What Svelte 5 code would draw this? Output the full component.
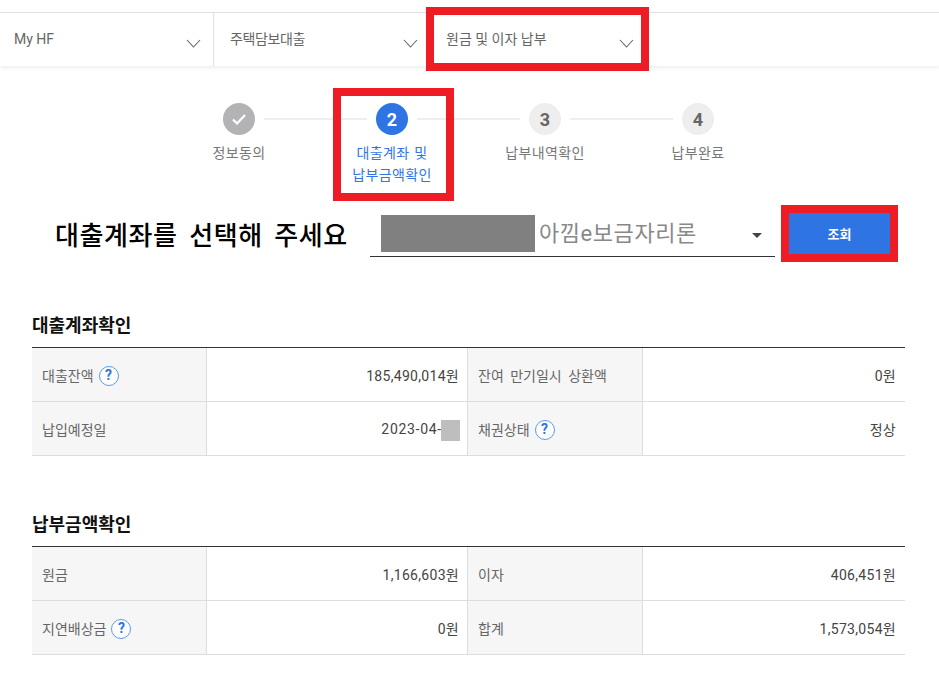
<script>
  const steps = [
    { n: '✓', label: ['정보동의'], cls: 'done' },
    { n: '2', label: ['대출계좌 및', '납부금액확인'], cls: 'active' },
    { n: '3', label: ['납부내역확인'], cls: '' },
    { n: '4', label: ['납부완료'], cls: '' }
  ];
  const nav = [
    { t: 'My HF', w: 214 },
    { t: '주택담보대출', w: 216 },
    { t: '원금 및 이자 납부', w: 216 }
  ];
  const t1 = [
    [{ l: '대출잔액', q: true }, { v: '185,490,014원' }, { l: '잔여 만기일시 상환액' }, { v: '0원' }],
    [{ l: '납입예정일' }, { v: '2023-04-00', mask: true }, { l: '채권상태', q: true }, { v: '정상' }]
  ];
  const t2 = [
    [{ l: '원금' }, { v: '1,166,603원' }, { l: '이자' }, { v: '406,451원' }],
    [{ l: '지연배상금', q: true }, { v: '0원' }, { l: '합계' }, { v: '1,573,054원' }]
  ];
  const sections = [
    { title: '대출계좌확인', rows: t1 },
    { title: '납부금액확인', rows: t2 }
  ];
</script>

<div class="page">
  <nav class="nav">
    {#each nav as item}
      <div class="nav-item" style="width:{item.w}px">
        <span>{item.t}</span>
        <svg class="chev" width="15" height="9" viewBox="0 0 15 9"><path d="M1 1l6.5 7L14 1" fill="none" stroke="#666" stroke-width="1.1"/></svg>
      </div>
    {/each}
  </nav>

  <div class="steps">
    {#each steps as s, i}
      <div class="step {s.cls}">
        <div class="track">
          <div class="line" class:hidden={i === 0}></div>
          {#if s.cls === 'done'}
            <div class="circle"><svg width="16" height="13" viewBox="0 0 16 13"><path d="M2 6.5l4 4 8-8.5" fill="none" stroke="#fff" stroke-width="2.2"/></svg></div>
          {:else}
            <div class="circle">{s.n}</div>
          {/if}
          <div class="line" class:hidden={i === 3}></div>
        </div>
        <div class="label">
          {#each s.label as l}<div>{l}</div>{/each}
        </div>
      </div>
    {/each}
  </div>

  <div class="select-row">
    <h2>대출계좌를 선택해 주세요</h2>
    <div class="select">
      <span class="redact"></span>
      <span class="sel-text">아낌e보금자리론</span>
      <span class="caret"></span>
    </div>
    <button class="btn">조회</button>
  </div>

  {#each sections as sec, si}
    <section class="sec" class:second={si === 1}>
      <h3>{sec.title}</h3>
      <div class="table">
        {#each sec.rows as row}
          {#each row as c}
            {#if c.l}
              <div class="th">
                <span>{c.l}</span>
                {#if c.q}<span class="q">?</span>{/if}
              </div>
            {:else}
              <div class="td" class:date={c.mask}>
                {c.v}
                {#if c.mask}<span class="mask"></span>{/if}
              </div>
            {/if}
          {/each}
        {/each}
      </div>
    </section>
  {/each}

  <div class="mark m1"></div>
  <div class="mark m2"></div>
  <div class="mark m3"></div>
</div>

<style>
  :global(body) {
    margin: 0;
    background: #fff;
  }
  .page {
    position: relative;
    width: 939px;
    height: 679px;
    overflow: hidden;
    font-family: Roboto, "Noto Sans CJK KR", sans-serif;
    padding-top: 12px;
    box-sizing: border-box;
  }
  .nav {
    display: flex;
    height: 54px;
    box-sizing: border-box;
    border-top: 1px solid #e2e2e2;
    box-shadow: 0 2px 4px rgba(0, 0, 0, 0.07);
  }
  .nav-item {
    display: flex;
    justify-content: space-between;
    box-sizing: border-box;
    padding: 17px 12px 0 14px;
    border-right: 1px solid #e2e2e2;
    font-size: 14px;
    line-height: 18px;
    color: #666;
  }
  .nav-item:last-child {
    border-right: 0;
    padding-left: 16px;
  }
  .nav-item:nth-child(2) {
    padding-left: 16px;
    border-right: 0;
    letter-spacing: -0.4px;
  }
  .chev {
    margin-top: 9px;
  }
  .steps {
    display: flex;
    justify-content: center;
    margin-top: 37px;
    padding-right: 2px;
    height: 98px;
  }
  .step {
    width: 153px;
    display: flex;
    flex-direction: column;
    align-items: center;
  }
  .track {
    display: flex;
    align-items: center;
    width: 100%;
    height: 32px;
  }
  .line {
    flex: 1;
    height: 2px;
    background: #eee;
  }
  .hidden {
    background: transparent;
  }
  .circle {
    width: 32px;
    height: 32px;
    border-radius: 50%;
    margin: 0 9px;
    background: #eee;
    color: #666;
    font-size: 18px;
    font-weight: 700;
    display: flex;
    align-items: center;
    justify-content: center;
    flex: none;
  }
  .done .circle {
    background: #b3b3b6;
  }
  .active .circle {
    background: #2f74e3;
    color: #fff;
  }
  .label {
    margin-top: 7px;
    font-size: 14px;
    line-height: 22px;
    color: #777;
    text-align: center;
    letter-spacing: 0.35px;
    word-spacing: 1px;
  }
  .active .label {
    color: #3176e6;
  }
  .select-row {
    display: flex;
    align-items: flex-start;
    margin-top: 7px;
    height: 59px;
    padding-left: 55px;
  }
  h2 {
    margin: 10px 0 0;
    width: 315px;
    font-size: 26px;
    line-height: 37px;
    font-weight: 500;
    color: #000;
    white-space: nowrap;
    letter-spacing: 0.6px;
    word-spacing: 4.5px;
  }
  .select {
    position: relative;
    width: 405px;
    height: 50px;
    box-sizing: border-box;
    margin-top: -1px;
    padding: 8px 0 0 11px;
    border-bottom: 1px solid #333;
    display: flex;
    align-items: flex-start;
  }
  .redact {
    width: 154px;
    height: 37px;
    background: #808080;
  }
  .sel-text {
    margin-left: 4px;
    font-size: 22px;
    line-height: 37px;
    color: #888;
    letter-spacing: 0.55px;
  }
  .caret {
    position: absolute;
    left: 382px;
    top: 26px;
    border: 5px solid transparent;
    border-top-color: #444;
    border-bottom: 0;
  }
  .btn {
    margin: 5px 0 0 14px;
    width: 101px;
    height: 41px;
    border: 0;
    padding: 0;
    background: #2f74e3;
    color: #fff;
    font-family: inherit;
    font-size: 13px;
    font-weight: 700;
  }
  .sec {
    padding: 0 34px 0 32px;
    margin-top: 46px;
  }
  .sec.second {
    margin-top: 56px;
  }
  h3 {
    margin: 0;
    height: 34px;
    font-size: 18px;
    line-height: 26px;
    font-weight: 700;
    color: #111;
  }
  .table {
    display: grid;
    grid-template-columns: 175px 261px 175px 262px;
    border-top: 1px solid #333;
    width: 873px;
  }
  .th,
  .td {
    height: 54px;
    box-sizing: border-box;
    border-bottom: 1px solid #ddd;
    font-size: 14px;
    display: flex;
    align-items: center;
  }
  .th {
    background: #f6f6f6;
    border-right: 1px solid #ddd;
    padding-left: 10px;
    gap: 5px;
    color: #666;
    word-spacing: 3px;
  }
  .td {
    position: relative;
    justify-content: flex-end;
    padding-right: 8px;
    border-right: 1px solid #ddd;
    color: #444;
    letter-spacing: 0.3px;
  }
  .td:nth-child(4n) {
    border-right: 0;
    padding-right: 9px;
  }
  .td.date {
    letter-spacing: 0.7px;
  }
  .q {
    width: 20px;
    height: 20px;
    margin-top: 2px;
    box-sizing: border-box;
    border: 1.5px solid #5a9bec;
    border-radius: 50%;
    color: #2f74e3;
    font-size: 14px;
    font-weight: 700;
    line-height: 17px;
    text-align: center;
    background: #fff;
  }
  .mask {
    position: absolute;
    left: 234px;
    top: 18px;
    width: 19px;
    height: 21px;
    background: #bebebe;
  }
  .mark {
    position: absolute;
    box-sizing: border-box;
    border: 8px solid #ee1c25;
  }
  .m1 {
    left: 426px;
    top: 7px;
    width: 223px;
    height: 64px;
  }
  .m2 {
    left: 333px;
    top: 88px;
    width: 121px;
    height: 113px;
  }
  .m3 {
    left: 781px;
    top: 205px;
    width: 117px;
    height: 57px;
  }
</style>
